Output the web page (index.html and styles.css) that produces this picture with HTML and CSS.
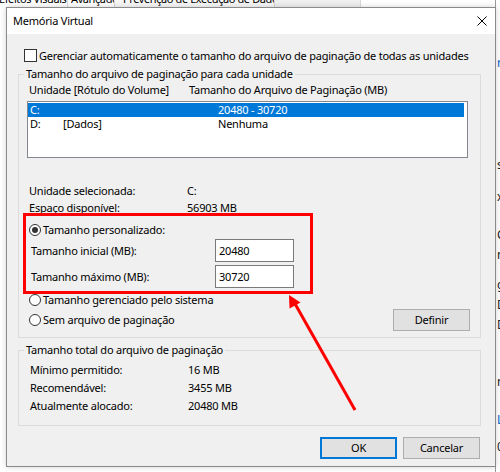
FILE: index.html
```html
<!DOCTYPE html>
<html lang="pt-BR">
<head>
<meta charset="utf-8">
<title>Memória Virtual</title>
<link rel="stylesheet" href="styles.css">
</head>
<body>
<div class="desk">
  <div class="tabs">
    <span class="tab t1">Efeitos Visuais</span>
    <span class="tab t2">Avançado</span>
    <span class="tab t3">Prevenção de Execução de Dados</span>
    <span class="tab blank"></span>
  </div>
  <div class="side">
    <span class="frag blue f1">r</span>
    <span class="frag f2">s</span>
    <span class="frag f3">x</span>
    <span class="frag f4">C</span>
    <span class="frag f5">n</span>
    <span class="frag f6">g</span>
    <span class="frag f7">D</span>
    <span class="frag f8">D</span>
    <span class="frag f9">n</span>
    <span class="frag blue f10">L</span>
    <span class="frag f11">0</span>
  </div>

  <div class="dialog">
    <div class="titlebar">
      <span class="title">Memória Virtual</span>
      <svg class="close" width="10" height="10" viewBox="0 0 10 10"><path d="M0.5 0.5 L9.5 9.5 M9.5 0.5 L0.5 9.5" stroke="#000" stroke-width="1" fill="none"/></svg>
    </div>
    <div class="body">
      <div class="check-row"><span class="checkbox"></span><span>Gerenciar automaticamente o tamanho do arquivo de paginação de todas as unidades</span></div>

      <div class="group g1">
        <div class="group-title">Tamanho do arquivo de paginação para cada unidade</div>
        <div class="cols"><span>Unidade [Rótulo do Volume]</span><span>Tamanho do Arquivo de Paginação (MB)</span></div>
        <div class="listbox">
          <div class="li sel"><span>C:</span><span></span><span>20480 - 30720</span></div>
          <div class="li"><span>D:</span><span>[Dados]</span><span>Nenhuma</span></div>
        </div>
        <div class="info">
          <div class="kv"><span>Unidade selecionada:</span><span>C:</span></div>
          <div class="kv"><span>Espaço disponível:</span><span>56903 MB</span></div>
        </div>
        <div class="radio-row first"><span class="radio on"></span><span>Tamanho personalizado:</span></div>
        <div class="field"><span class="flabel">Tamanho inicial (MB):</span><span class="input">20480</span></div>
        <div class="field f2"><span class="flabel">Tamanho máximo (MB):</span><span class="input">30720</span></div>
        <div class="radio-row second"><span class="radio"></span><span>Tamanho gerenciado pelo sistema</span></div>
        <div class="radio-row third"><span class="radio"></span><span>Sem arquivo de paginação</span><span class="btn definir">Definir</span></div>
      </div>

      <div class="group g2">
        <div class="group-title">Tamanho total do arquivo de paginação</div>
        <div class="totals">
          <div class="kv2"><span>Mínimo permitido:</span><span>16 MB</span></div>
          <div class="kv2"><span>Recomendável:</span><span>3455 MB</span></div>
          <div class="kv2"><span>Atualmente alocado:</span><span>20480 MB</span></div>
        </div>
      </div>

      <div class="actions">
        <span class="btn ok">OK</span>
        <span class="btn">Cancelar</span>
      </div>
    </div>
  </div>

  <div class="highlight"></div>
  <svg class="arrow" width="500" height="472" viewBox="0 0 500 472">
    <line x1="355" y1="410" x2="294" y2="302" stroke="#ff0000" stroke-width="3"/>
    <polygon points="289,295 300.5,302.5 289.5,308.5" fill="#ff0000"/>
  </svg>
</div>
</body>
</html>
```

FILE: styles.css
```css
* { box-sizing: border-box; }

html, body {
  margin: 0;
  padding: 0;
}

body {
  width: 500px;
  height: 472px;
  overflow: hidden;
  background: #ffffff;
  font-family: "Noto Sans", "Segoe UI", sans-serif;
  font-size: 11px;
  letter-spacing: -0.22px;
  color: #000;
}

.desk {
  position: relative;
  width: 500px;
  height: 472px;
  overflow: hidden;
  background: #ffffff;
}

/* window behind */
.tabs {
  position: absolute;
  top: -9px;
  left: -2px;
  display: flex;
  height: 16px;
  line-height: 16px;
  letter-spacing: -0.4px;
}
.tab {
  flex: none;
  border-right: 1px solid #d9d9d9;
  background: #ffffff;
  color: #000;
  white-space: nowrap;
  overflow: hidden;
}
.t1 { width: 70px; padding-left: 1px; }
.t2 { width: 47px; padding-left: 3px; }
.t3 { width: 160px; padding-left: 8px; background: #f7f7f7; }
.tab.blank { width: 86px; background: #f0f0f0; }

.side {
  position: absolute;
  left: 495px;
  top: 0;
  width: 5px;
  height: 472px;
  background: #fff;
  border-left: 1px solid #9a9a9a;
}
.frag { position: absolute; left: 1px; line-height: 14px; color: #1a1a1a; font-size: 12px; }
.frag.blue { color: #0066cc; }
.f1 { top: 56px; } .f2 { top: 158px; } .f3 { top: 190px; } .f4 { top: 228px; }
.f5 { top: 248px; } .f6 { top: 278px; } .f7 { top: 298px; } .f8 { top: 318px; }
.f9 { top: 375px; } .f10 { top: 413px; } .f11 { top: 440px; }

/* dialog */
.dialog {
  position: absolute;
  left: 6px;
  top: 7px;
  width: 490px;
  height: 460px;
  border: 1px solid #8a8a8a;
  background: #f0f0f0;
  box-shadow: 0 0 6px rgba(0, 0, 0, 0.18);
  display: flex;
  flex-direction: column;
}

.titlebar {
  flex: none;
  height: 26px;
  background: #ffffff;
  display: flex;
  align-items: center;
  justify-content: space-between;
  padding: 0 8px 0 6px;
  line-height: 16px;
}
.close { display: block; }

.body {
  flex: 1;
  min-height: 0;
  padding-top: 15px;
}

.check-row {
  display: flex;
  align-items: center;
  height: 13px;
  padding-left: 17px;
  gap: 2px;
  white-space: nowrap;
  line-height: 16px;
}
.checkbox {
  width: 13px;
  height: 13px;
  border: 1px solid #333;
  background: #fff;
  flex: none;
}

.group {
  border: 1px solid #dcdcdc;
  margin-left: 11px;
  width: 463px;
}
.g1 { margin-top: 12px; padding-bottom: 6px; }
.g2 { margin-top: 12px; padding-bottom: 10px; }

.group-title {
  width: max-content;
  margin: -9px 0 0 5px;
  padding: 0 2px;
  line-height: 16px;
  height: 16px;
  background: #f0f0f0;
}

.cols {
  display: grid;
  grid-template-columns: 160px 1fr;
  padding-left: 10px;
  line-height: 16px;
  height: 16px;
}

.listbox {
  margin: 3px 0 0 8px;
  width: 441px;
  height: 57px;
  border: 1px solid #828790;
  background: #fff;
  padding: 0 3px 0 0;
}
.li {
  display: grid;
  grid-template-columns: 33px 155px 1fr;
  padding-left: 2px;
  height: 14px;
  line-height: 14px;
}
.li.sel { background: #0078d7; color: #fff; margin-top: 1px; }

.info { margin-top: 24px; padding-left: 10px; }
.kv {
  display: grid;
  grid-template-columns: 158px 1fr;
  height: 17px;
  line-height: 17px;
}

.radio-row {
  display: flex;
  align-items: center;
  padding-left: 10px;
  gap: 2px;
  height: 16px;
  line-height: 16px;
}
.radio-row.first { margin-top: 6px; }
.radio-row.second { margin-top: 4px; }
.radio-row.third { margin-top: 1px; height: 22px; padding-right: 10px; }
.radio {
  width: 12px;
  height: 12px;
  border: 1px solid #333;
  border-radius: 50%;
  background: #fff;
  flex: none;
  display: flex;
  align-items: center;
  justify-content: center;
}
.radio.on::after {
  content: "";
  width: 6px;
  height: 6px;
  border-radius: 50%;
  background: #333;
}

.field {
  display: flex;
  align-items: center;
  padding-left: 12px;
  height: 23px;
  margin-top: 1px;
  line-height: 16px;
}
.field.f2 { margin-top: 3px; }
.flabel { width: 184px; }
.input {
  width: 79px;
  height: 23px;
  border: 1px solid #7a7a7a;
  background: #fff;
  padding-left: 3px;
  line-height: 21px;
}

.btn {
  display: flex;
  align-items: center;
  justify-content: center;
  width: 77px;
  height: 22px;
  background: #e1e1e1;
  border: 1px solid #adadad;
  line-height: 16px;
}
.definir { margin-left: auto; }

.totals { padding-left: 11px; padding-top: 3px; }
.kv2 {
  display: grid;
  grid-template-columns: 158px 1fr;
  height: 18px;
  line-height: 18px;
}

.actions {
  display: flex;
  justify-content: flex-end;
  gap: 6px;
  margin-top: 11px;
  padding-right: 15px;
}
.btn.ok {
  border-color: #0078d7;
  box-shadow: inset 0 0 0 1px #0078d7;
}

.highlight {
  position: absolute;
  left: 23px;
  top: 213px;
  width: 290px;
  height: 81px;
  border: 3px solid #ff0000;
}
.arrow {
  position: absolute;
  left: 0;
  top: 0;
  pointer-events: none;
}
```
